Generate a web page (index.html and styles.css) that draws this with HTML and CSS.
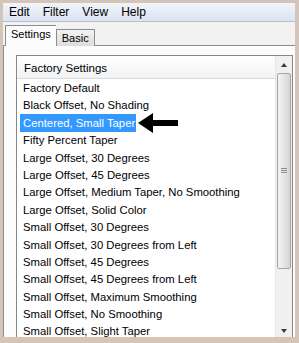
FILE: index.html
```html
<!DOCTYPE html>
<html lang="en">
<head>
    <meta charset="UTF-8">
    <title>Shadow Settings</title>
    <link rel="stylesheet" href="styles.css">
</head>
<body>
    <div class="window">
        <div class="menubar">
            <span>Edit</span>
            <span>Filter</span>
            <span>View</span>
            <span>Help</span>
        </div>
        <div class="tabs">
            <div class="tab active">Settings</div>
            <div class="tab">Basic</div>
        </div>
        <div class="panel">
            <div class="listbox">
                <div class="list">
                    <div class="list-header">Factory Settings</div>
                    <div class="items">
                        <div class="item">Factory Default</div>
                        <div class="item">Black Offset, No Shading</div>
                        <div class="item-row">
                            <span class="item selected">Centered, Small Taper</span>
                            <svg class="pointer" width="41" height="20" viewBox="0 0 41 20">
                                <path d="M0 10 L15 0 L15 7 L40 7 L40 13 L15 13 L15 20 Z" fill="#000"/>
                            </svg>
                        </div>
                        <div class="item">Fifty Percent Taper</div>
                        <div class="item">Large Offset, 30 Degrees</div>
                        <div class="item">Large Offset, 45 Degrees</div>
                        <div class="item">Large Offset, Medium Taper, No Smoothing</div>
                        <div class="item">Large Offset, Solid Color</div>
                        <div class="item">Small Offset, 30 Degrees</div>
                        <div class="item">Small Offset, 30 Degrees from Left</div>
                        <div class="item">Small Offset, 45 Degrees</div>
                        <div class="item">Small Offset, 45 Degrees from Left</div>
                        <div class="item">Small Offset, Maximum Smoothing</div>
                        <div class="item">Small Offset, No Smoothing</div>
                        <div class="item">Small Offset, Slight Taper</div>
                    </div>
                </div>
                <div class="scrollbar">
                    <div class="sb-btn"><span class="tri up"></span></div>
                    <div class="sb-thumb"><span class="grip"></span></div>
                    <div class="sb-track"></div>
                    <div class="sb-btn"><span class="tri down"></span></div>
                </div>
            </div>
        </div>
    </div>
</body>
</html>
```
FILE: styles.css
```css
body {
    margin: 0;
    background-color: #d5c5b8;
    font-family: "Liberation Sans", Arial, sans-serif;
    font-size: 11.3px;
    color: #000;
}
.window {
    margin: 3px 4px 0 3px;
    height: 334px;
    background: #fcfcfc;
    display: flex;
    flex-direction: column;
    overflow: hidden;
}
.menubar {
    height: 18px;
    display: flex;
    align-items: center;
    gap: 13px;
    padding-left: 6px;
    font-size: 12px;
    background: linear-gradient(#f1f4fa, #dbe4f1);
    border-bottom: 1px solid #b9c0ca;
}
.tabs {
    height: 23px;
    display: flex;
    align-items: flex-end;
    padding-left: 2px;
    background: #f4f2f0;
    border-bottom: 1px solid #898c95;
}
.tab {
    height: 16px;
    padding: 0 5px;
    margin-bottom: -1px;
    border: 1px solid #898c95;
    border-bottom: none;
    background: linear-gradient(#f2f2f2, #dcdcdc);
    font-size: 11px;
    line-height: 16px;
}
.tab.active {
    height: 20px;
    padding: 0 5px;
    background: #fcfcfc;
    border-right: none;
    line-height: 17px;
    position: relative;
    z-index: 1;
}
.panel {
    flex: 1;
    padding: 9px 2px 0 12px;
    border-left: 1px solid #898c95;
    overflow: hidden;
}
.listbox {
    display: flex;
    height: 283px;
    border: 1px solid #828790;
    background: #fff;
}
.list {
    flex: 1;
}
.list-header {
    height: 22px;
    line-height: 24px;
    padding-left: 7px;
    font-size: 11.5px;
    background: linear-gradient(#ffffff, #f1f2f4);
    border-bottom: 1px solid #d6d8dc;
}
.items {
    padding-top: 1px;
}
.item {
    display: block;
    height: 17.4px;
    line-height: 17.4px;
    padding-left: 6px;
    white-space: nowrap;
}
.item-row {
    display: flex;
    align-items: center;
    height: 17.4px;
    padding-left: 3px;
}
.item.selected {
    display: inline-block;
    height: 18px;
    line-height: 18px;
    padding: 0 1px 0 3px;
    background: #3399ff;
    color: #fff;
}
.pointer {
    margin-left: 2px;
}
.scrollbar {
    width: 16px;
    display: flex;
    flex-direction: column;
    background: #f0f0f0;
    border-left: 1px solid #e6e6e6;
}
.sb-btn {
    height: 17px;
    display: flex;
    align-items: center;
    justify-content: center;
}
.tri {
    width: 0;
    height: 0;
    border-left: 3px solid transparent;
    border-right: 3px solid transparent;
}
.tri.up {
    border-bottom: 4px solid #3c3c3c;
}
.tri.down {
    border-top: 4px solid #3c3c3c;
}
.sb-thumb {
    height: 194px;
    margin: 0 1px;
    border: 1px solid #a4a4a4;
    border-radius: 2px;
    background: linear-gradient(90deg, #f4f4f4, #e2e2e2 60%, #d6d6d6);
    display: flex;
    align-items: center;
    justify-content: center;
}
.grip {
    width: 6px;
    height: 6px;
    background: repeating-linear-gradient(#8c8c8c 0 1px, transparent 1px 2px);
}
.sb-track {
    flex: 1;
}
```
